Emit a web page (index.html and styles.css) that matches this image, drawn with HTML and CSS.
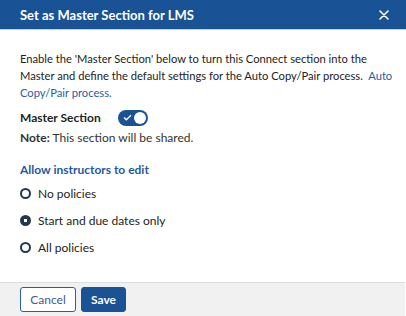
FILE: index.html
```html
<!DOCTYPE html>
<html lang="en">
<head>
  <meta charset="UTF-8"/>
  <title>Set as Master Section for LMS</title>
  <link rel="stylesheet" href="styles.css">
</head>
<body>
  <div class="modal">
    <header class="modal-head">
      <h1>Set as Master Section for LMS</h1>
      <button class="close-btn" aria-label="Close">
        <svg width="10" height="10" viewBox="0 0 10 10"><path d="M1 1L9 9M9 1L1 9" stroke="#fff" stroke-width="1.6" stroke-linecap="round"/></svg>
      </button>
    </header>

    <div class="modal-body">
      <p class="intro">Enable the 'Master Section' below to turn this Connect section into the Master and define the default settings for the Auto Copy/Pair process.&nbsp; <a href="#">Auto Copy/Pair process.</a></p>

      <div class="master-row">
        <span class="master-label">Master Section</span>
        <span class="toggle on">
          <svg width="9" height="7" viewBox="0 0 9 7"><path d="M1 3.6L3.3 5.8L8 1.2" fill="none" stroke="#fff" stroke-width="1.4"/></svg>
          <span class="knob"></span>
        </span>
      </div>
      <p class="note"><strong>Note:</strong> This section will be shared.</p>

      <h2 class="group-title">Allow instructors to edit</h2>
      <label class="radio"><span class="dot"></span>No policies</label>
      <label class="radio checked"><span class="dot"></span>Start and due dates only</label>
      <label class="radio"><span class="dot"></span>All policies</label>
    </div>

    <footer class="modal-foot">
      <button class="btn btn-cancel">Cancel</button>
      <button class="btn btn-save">Save</button>
    </footer>
  </div>
</body>
</html>
```

FILE: styles.css
```css
*, *::before, *::after { box-sizing: border-box; }

body {
  margin: 0;
  font-family: Lato, 'Open Sans', sans-serif;
  color: #1f1f1f;
  background: #fff;
}

.modal {
  width: 406px; height: 316px;
  display: flex; flex-direction: column;
  overflow: hidden;
}

/* Header */
.modal-head {
  height: 30px;
  background: #1a5296;
  border-bottom: 1px solid #c9cfd8;
  display: flex; align-items: center; justify-content: space-between;
  padding: 0 17px 0 20px;
}
.modal-head h1 {
  margin: 0;
  font-size: 13px; font-weight: 700;
  color: #fff;
}
.close-btn {
  background: none; border: none; padding: 0;
  display: flex; cursor: pointer;
}

/* Body */
.modal-body {
  flex: 1;
  padding: 20px 6px 0 20px;
}
.intro {
  margin: 0;
  font-size: 11.2px; line-height: 17px;
  color: #232323;
}
.intro a { color: #2a5ea5; text-decoration: none; }

.master-row {
  display: flex; align-items: center;
  margin-top: 8px; height: 17px;
}
.master-label { font-size: 12px; font-weight: 700; }
.toggle {
  margin-left: 17px;
  width: 30px; height: 16px;
  border-radius: 8px;
  background: #1a5296;
  display: flex; align-items: center; justify-content: space-between;
  padding: 0 2px 0 5px;
}
.toggle .knob {
  width: 12px; height: 12px; border-radius: 50%;
  background: #fff;
}
.note {
  margin: 3px 0 0;
  font-size: 12px; line-height: 17px;
  color: #333;
}

.group-title {
  margin: 15px 0 2px;
  font-size: 12px; line-height: 17px; font-weight: 700;
  color: #1f5aa0;
}
.radio {
  display: flex; align-items: center;
  height: 27px;
  font-size: 12px; color: #232323;
}
.dot {
  width: 11px; height: 11px;
  border: 2px solid #22384f; border-radius: 50%;
  margin-right: 7px;
}
.radio.checked .dot {
  background: radial-gradient(circle, #fff 0 1.5px, #22384f 2px);
}

/* Footer */
.modal-foot {
  height: 34px;
  background: #f1f1f1;
  border-top: 1px solid #dedede;
  display: flex; align-items: center; gap: 5px;
  padding: 0 20px;
  margin-right: 1px;
}
.btn {
  height: 25px;
  border-radius: 3px;
  font-family: Lato, sans-serif;
  font-size: 12px;
  cursor: pointer;
}
.btn-cancel {
  width: 56px;
  background: #fff; color: #3f5a9c;
  border: 1px solid #2a5ea5;
}
.btn-save {
  width: 45px;
  background: #1a5296; color: #fff;
  border: 1px solid #1a5296;
  font-weight: 700;
}
```
